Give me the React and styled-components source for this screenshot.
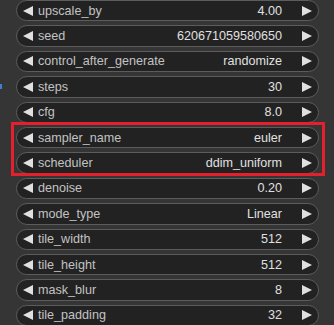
import React from 'react';
import styled, { createGlobalStyle } from 'styled-components';

const GlobalStyle = createGlobalStyle`
  html, body {
    margin: 0;
    padding: 0;
    background: #353535;
    overflow: hidden;
  }
`;

const widgets = [
  { name: 'upscale_by', value: '4.00' },
  { name: 'seed', value: '620671059580650' },
  { name: 'control_after_generate', value: 'randomize' },
  { name: 'steps', value: '30' },
  { name: 'cfg', value: '8.0' },
  { name: 'sampler_name', value: 'euler' },
  { name: 'scheduler', value: 'ddim_uniform' },
  { name: 'denoise', value: '0.20' },
  { name: 'mode_type', value: 'Linear' },
  { name: 'tile_width', value: '512' },
  { name: 'tile_height', value: '512' },
  { name: 'mask_blur', value: '8' },
  { name: 'tile_padding', value: '32' },
];

const Node = styled.div`
  position: relative;
  width: 334px;
  height: 325px;
  overflow: hidden;
  background: #353535;
  box-sizing: border-box;
  padding: 0 15px 0 16px;
  font-family: "Liberation Sans", Arial, sans-serif;
`;

const List = styled.div`
  display: flex;
  flex-direction: column;
  gap: 4px;
`;

const Widget = styled.div`
  display: flex;
  align-items: center;
  height: 21.4px;
  box-sizing: border-box;
  border: 1px solid #5c5c5c;
  border-radius: 11px;
  background: #222222;
  padding: 0 6px 0 6px;
  font-size: 12.6px;
`;

const Arrow = styled.span`
  width: 0;
  height: 0;
  border-top: 5.5px solid transparent;
  border-bottom: 5.5px solid transparent;
  ${({ $dir }) =>
    $dir === 'left'
      ? 'border-right: 10px solid #e0e0e0;'
      : 'border-left: 10px solid #e0e0e0;'}
  flex-shrink: 0;
`;

const Label = styled.span`
  color: #c2c2c2;
  margin-left: 5px;
  white-space: nowrap;
`;

const Value = styled.span`
  color: #e0e0e0;
  margin-left: auto;
  margin-right: 20px;
  white-space: nowrap;
`;

const Highlight = styled.div`
  position: absolute;
  left: 11px;
  top: 122px;
  width: 314px;
  height: 54px;
  box-sizing: border-box;
  border: 3px solid #e3202b;
  pointer-events: none;
`;

const Slot = styled.div`
  position: absolute;
  left: 0;
  top: 84px;
  width: 2px;
  height: 5px;
  background: #3d7fd6;
`;

export default function App() {
  return (
    <>
      <GlobalStyle />
      <Node>
        <List>
          {widgets.map((w) => (
            <Widget key={w.name}>
              <Arrow $dir="left" />
              <Label>{w.name}</Label>
              <Value>{w.value}</Value>
              <Arrow $dir="right" />
            </Widget>
          ))}
        </List>
        <Slot />
        <Highlight />
      </Node>
    </>
  );
}
